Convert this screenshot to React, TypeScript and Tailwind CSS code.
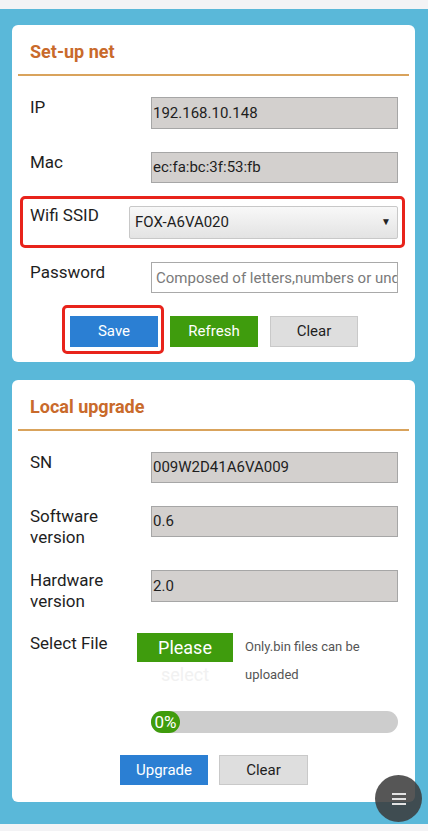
import React from "react";

const font = { fontFamily: "Roboto, 'Noto Sans', Arial, sans-serif" };

function CardHeader({ title }: { title: string }) {
  return (
    <div>
      <div className="pt-[15px] pb-[10px] pl-[18px] text-[18px] leading-[24px] font-bold text-[#c96a2b]">
        {title}
      </div>
      <div className="mx-[6px] h-[2px] bg-[#d9a35c]" />
    </div>
  );
}

function ReadRow({
  label,
  value,
  className = "",
  h = "h-[31px]",
}: {
  label: React.ReactNode;
  value: string;
  className?: string;
  h?: string;
}) {
  return (
    <div className={`flex items-start ${className}`}>
      <div className="w-[121px] shrink-0 text-[17px] leading-[21px] text-[#1e1e1e]">{label}</div>
      <div
        className={`w-[247px] ${h} flex items-center bg-[#d3d0ce] border border-[#a6a6a6] pl-[1px] text-[15px] text-[#1e1e1e]`}
      >
        {value}
      </div>
    </div>
  );
}

export default function App() {
  return (
    <div style={font} className="w-[428px] min-h-[831px] flex flex-col bg-[#f3f3f5]">
      <div className="h-[9px] bg-[#f3f3f5]" />
      <div className="bg-[#5ab8d9] pt-[16px] pb-[22px] px-[12px] flex flex-col gap-[18px]">
        {/* Card 1 */}
        <div className="w-[403px] bg-white rounded-[6px] pb-[15px]">
          <CardHeader title="Set-up net" />
          <div className="pl-[18px] pr-[17px] pt-[21px] flex flex-col">
            <ReadRow label="IP" value="192.168.10.148" h="h-[32px]" />
            <ReadRow label="Mac" value="ec:fa:bc:3f:53:fb" className="mt-[23px]" />
            <div className="relative flex items-start mt-[23px]">
              <div className="absolute left-[-10px] right-[-7px] top-[-10px] bottom-[-9px] border-[3px] border-[#e8231b] rounded-[5px] pointer-events-none" />
              <div className="w-[99px] shrink-0 text-[17px] leading-[21px] mt-[-1px] text-[#1e1e1e]">Wifi SSID</div>
              <div className="relative w-[270px] h-[33px] border border-[#c8c8c8] rounded-[2px] bg-gradient-to-b from-[#f8f8f8] to-[#e3e3e3] flex items-center pl-[5px] text-[15px] text-[#1e1e1e]">
                FOX-A6VA020
                <span className="absolute right-[6px] top-[8px] text-[10px] leading-[14px] text-[#222]">▼</span>
              </div>
            </div>
            <div className="flex items-start mt-[23px]">
              <div className="w-[121px] shrink-0 text-[17px] leading-[21px] text-[#1e1e1e]">Password</div>
              <input
                className="w-[247px] h-[31px] border border-[#a9a9a9] bg-white pl-[4px] text-[15px] text-[#1e1e1e] placeholder:text-[#7a7a7a] outline-none"
                placeholder="Composed of letters,numbers or underscores"
              />
            </div>
          </div>
          <div className="flex justify-center gap-[12px] mt-[23px] pl-[1px]">
            <div className="relative">
              <div className="absolute left-[-8px] right-[-6px] top-[-11px] bottom-[-7px] border-[3px] border-[#e8231b] rounded-[5px] pointer-events-none" />
              <button className="w-[88px] h-[31px] bg-[#2b7fd3] text-white text-[15px]">Save</button>
            </div>
            <button className="w-[88px] h-[31px] bg-[#3f9c0d] text-white text-[15px]">Refresh</button>
            <button className="w-[88px] h-[31px] bg-[#dedede] border border-[#c9c9c9] text-[#1e1e1e] text-[15px]">
              Clear
            </button>
          </div>
        </div>

        {/* Card 2 */}
        <div className="w-[403px] bg-white rounded-[6px] pb-[17px]">
          <CardHeader title="Local upgrade" />
          <div className="pl-[18px] pr-[17px] pt-[21px] flex flex-col">
            <ReadRow label="SN" value="009W2D41A6VA009" />
            <ReadRow
              label={
                <>
                  Software
                  <br />
                  version
                </>
              }
              value="0.6"
              className="mt-[23px]"
            />
            <ReadRow
              label={
                <>
                  Hardware
                  <br />
                  version
                </>
              }
              value="2.0"
              className="mt-[22px]"
              h="h-[32px]"
            />
            <div className="flex items-start mt-[21px]">
              <div className="w-[107px] shrink-0 text-[17px] leading-[21px] text-[#1e1e1e]">Select File</div>
              <div className="w-[96px] h-[29px] shrink-0 bg-[#3f9c0d] text-center text-[18px] leading-[27px] pt-[1px]">
                <span className="block text-white">Please</span>
                <span className="block text-[#f1f1f1]">select</span>
              </div>
              <div className="ml-[12px] text-[13px] leading-[28px] text-[#555]">Only.bin files can be uploaded</div>
            </div>
            <div className="flex mt-[22px]">
              <div className="w-[121px] shrink-0" />
              <div className="w-[247px] h-[22px] rounded-full bg-[#cdcdcd] flex">
                <div className="h-[22px] w-[29px] rounded-full bg-[#3f9c0d] text-white text-[17px] leading-[22px] flex items-center justify-center">
                  0%
                </div>
              </div>
            </div>
          </div>
          <div className="flex justify-center gap-[11px] mt-[22px] pl-[1px]">
            <button className="w-[88px] h-[30px] bg-[#2b7fd3] text-white text-[15px]">Upgrade</button>
            <button className="w-[89px] h-[30px] bg-[#dedede] border border-[#c9c9c9] text-[#1e1e1e] text-[15px]">
              Clear
            </button>
          </div>
        </div>
      </div>
      <div className="flex-1 bg-[#f3f3f5]" />

      <button className="fixed left-[375px] top-[775px] w-[47px] h-[47px] rounded-full bg-[rgba(58,58,58,0.86)] flex flex-col items-center justify-center gap-[3px]">
        <span className="block w-[14px] h-[2px] bg-[#e2e2e2]" />
        <span className="block w-[14px] h-[2px] bg-[#e2e2e2]" />
        <span className="block w-[14px] h-[2px] bg-[#e2e2e2]" />
      </button>
    </div>
  );
}
